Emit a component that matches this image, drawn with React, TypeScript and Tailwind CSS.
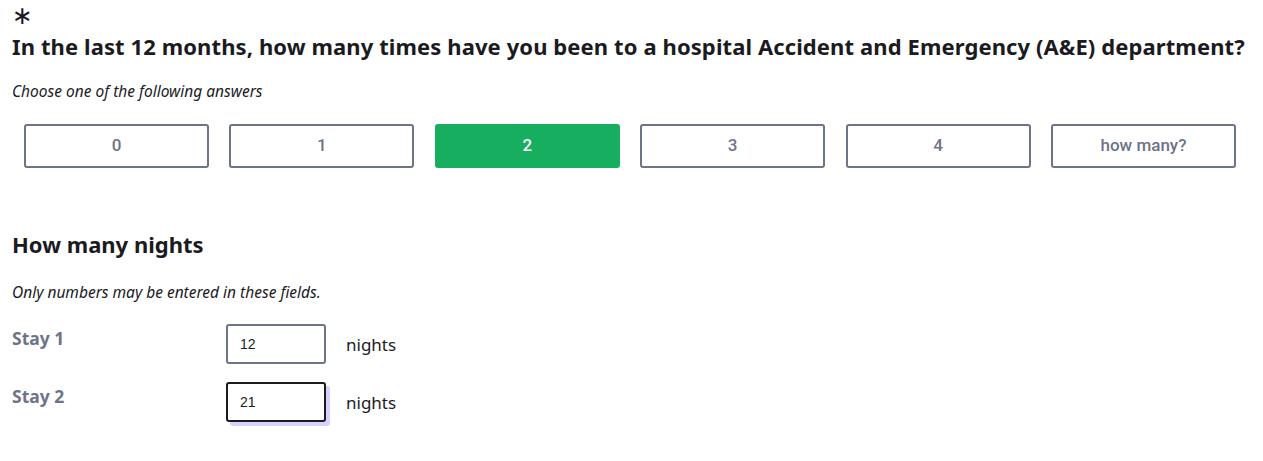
import { useState } from 'react';

const OPTIONS = ['0', '1', '2', '3', '4', 'how many?'];

export default function App() {
  const [selected, setSelected] = useState('2');
  const [stays, setStays] = useState(['12', '21']);

  return (
    <main className="min-h-screen bg-white px-3 text-[#1b1b1f] [font-family:'Noto_Sans',sans-serif]">
      <div className="text-[25px] leading-[31px] [font-family:'DejaVu_Sans',sans-serif]">∗</div>
      <h1 className="text-[22px] font-bold leading-[30px] tracking-[0.1px]">
        In the last 12 months, how many times have you been to a hospital Accident and Emergency (A&amp;E) department?
      </h1>
      <p className="mt-[19px] text-[15.5px] italic leading-[22px]">Choose one of the following answers</p>

      <div className="ml-3 mt-[22px] grid w-[1212px] grid-cols-6 gap-[20.4px]">
        {OPTIONS.map((option) => {
          const active = option === selected;
          return (
            <button
              key={option}
              onClick={() => setSelected(option)}
              className={
                active
                  ? 'h-[44px] rounded-[3px] border-2 border-[#17ae5f] bg-[#17ae5f] text-[17px] font-medium text-white [font-family:Roboto,sans-serif]'
                  : 'h-[44px] rounded-[3px] border-2 border-[#6e7488] bg-white text-[17px] font-medium text-[#6e7488] [font-family:Roboto,sans-serif]'
              }
            >
              {option}
            </button>
          );
        })}
      </div>

      <h2 className="mt-[61px] text-[22px] font-bold leading-[30px]">How many nights</h2>
      <p className="mt-[22px] text-[15.5px] italic leading-[22px]">Only numbers may be entered in these fields.</p>

      <div className="mt-[21px] flex flex-col gap-[18px]">
        {stays.map((value, index) => (
          <div key={index} className="flex items-start">
            <label className="w-[214px] pt-[2px] text-[17.5px] font-bold leading-[24px] text-[#6e7488]">
              Stay {index + 1}
            </label>
            <input
              value={value}
              onChange={(event) => {
                const next = [...stays];
                next[index] = event.target.value.replace(/[^0-9]/g, '');
                setStays(next);
              }}
              className={
                index === 1
                  ? 'h-[40px] w-[100px] rounded-[3px] border-2 border-[#1b1b1f] bg-white px-[12px] text-[14px] shadow-[4px_4px_0_#d9d0ff] outline-none [font-family:Arial,sans-serif]'
                  : 'h-[40px] w-[100px] rounded-[3px] border-2 border-[#6e7488] bg-white px-[12px] text-[14px] outline-none [font-family:Arial,sans-serif]'
              }
            />
            <span className="ml-[20px] pt-[9px] text-[17px] leading-[24px]">nights</span>
          </div>
        ))}
      </div>
    </main>
  );
}
